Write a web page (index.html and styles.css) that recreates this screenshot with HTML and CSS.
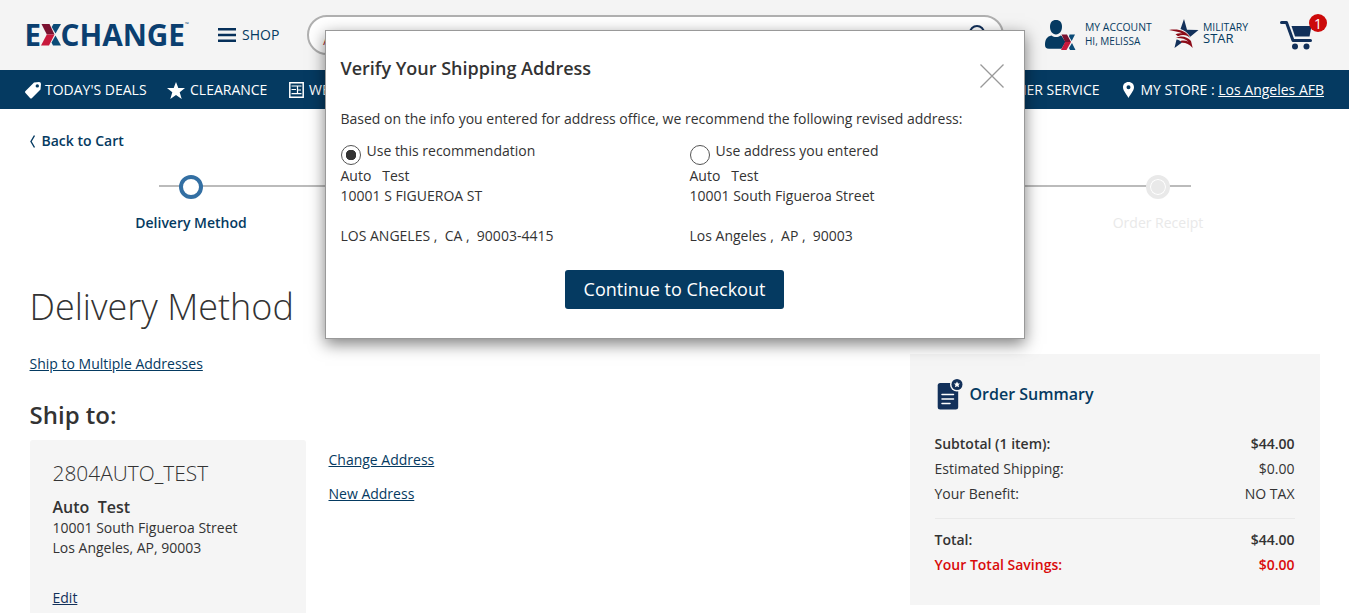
FILE: index.html
```html
<!DOCTYPE html>
<html lang="en">
<head>
<meta charset="utf-8">
<title>Exchange - Delivery Method</title>
<link rel="stylesheet" href="styles.css">
</head>
<body>
<div class="page">
  <header class="header">
    <svg class="logo" width="166" height="32" viewBox="0 0 166 32">
      <g class="logo-text">
        <text x="-.5" y="26.500" textLength="16.500" lengthAdjust="spacingAndGlyphs">E</text>
        <text x="35.500" y="26.500" textLength="124.500" lengthAdjust="spacingAndGlyphs">CHANGE</text>
        <text class="tm" x="160" y="7">™</text>
      </g>
      <path fill="#7b1230" d="M16.500 5h8l5 10.500h-7.700z"/>
      <path fill="#c8183c" d="M21.800 15.500h7.700L24 26.500h-8z"/>
      <path fill="#0b4b77" d="M28.500 5H36l-5.500 9.500-3.800-6.500z"/>
      <path fill="#0b4b77" d="M30.500 16.500L36 26.500h-8l-1.500-3z"/>
    </svg>
    <div class="shop">
      <svg width="18" height="14" viewBox="0 0 18 14"><path fill="#06305a" d="M0 0h18v2.500H0zM0 5.700h18v2.500H0zM0 11.400h18v2.500H0z"/></svg>
      <span>SHOP</span>
    </div>
    <div class="search">
      <span class="slash">/</span><span class="hint">Search by keyword</span>
      <svg width="20" height="20" viewBox="0 0 20 20" fill="none" stroke="#12305a" stroke-width="2"><circle cx="8" cy="8" r="7"/><path d="M13 13l6 6"/></svg>
    </div>
    <div class="account">
      <svg width="31" height="31" viewBox="0 0 31 31">
        <path fill="#053a61" d="M11 0c4 0 6 2.600 6 6.800 0 4.200-2.300 7.700-6 7.700S5 11 5 6.800C5 2.600 7 0 11 0zM6.500 15.500c2.800 2 6.500 2 9 0l1.200.6L20.500 22l-4 6.800H4C1 28.500 0 27.500 0 25c0-5.500 2-8.700 6.500-9.500z"/>
        <path fill="#7b1230" d="M16.500 14.500h5.500l4 7.500h-6z"/>
        <path fill="#c8183c" d="M20 22h6l-4.500 8h-5.500z"/>
        <path fill="#0b4b77" d="M24.500 14.500H30l-3.300 6.500-2.700-4.500zM27 23l3.500 7H25l-1-2z"/>
      </svg>
      <div class="two-line"><span>MY ACCOUNT</span><span class="hi">HI, MELISSA</span></div>
    </div>
    <div class="military">
      <svg width="30" height="30" viewBox="0 0 30 30">
        <path fill="#12305a" d="M15 0l3 10.700 11.500.3-8.200 6.700C18.500 13.500 15.500 11.500 11.500 10zM7.500 20.500c2 .3 3.800 1.300 5.500 3L5.500 29z"/>
        <path fill="#8c0b18" d="M0 11c9-1.300 17 .3 21.300 8C18 16 14 15 9 17.200L6.500 15.200c2.500-1 4.500-1.200 7-.7C9.500 12.500 5 12 0 11z"/>
        <path fill="#8c0b18" d="M6.500 19.200C12 16 18 17.500 22 22l1.700 7C20 25 16.500 23.500 12.500 23.800l-1-1.800c3-.8 5.500-.3 8 .8-3.500-3-8-4-13-3.600z"/>
      </svg>
      <div class="two-line"><span>MILITARY</span><span class="star-word">STAR</span></div>
    </div>
    <div class="cart">
      <svg width="32" height="30" viewBox="0 0 32 30">
        <path fill="none" stroke="#12305a" stroke-width="3" stroke-linejoin="round" stroke-linecap="round" d="M1.500 2.500h5l6.500 18h17.500"/>
        <path fill="#12305a" d="M11.500 6h20l-2 10.500H15z"/>
        <circle fill="#12305a" cx="15" cy="26.500" r="3"/><circle fill="#12305a" cx="26.500" cy="26.500" r="3"/>
      </svg>
      <span class="badge">1</span>
    </div>
  </header>

  <nav class="nav">
    <div class="nav-item deals">
      <svg width="16" height="17" viewBox="0 0 16 17"><path fill="#fff" fill-rule="evenodd" d="M9 .5L14 0q2 0 2 2l-.5 5.500L7 16q-1 1-2 0L.5 11q-1-1 0-2zM12.300 2.200a1.700 1.700 0 1 0 0 3.400 1.700 1.700 0 0 0 0-3.400z"/></svg>
      <span>TODAY'S DEALS</span>
    </div>
    <div class="nav-item clearance">
      <svg width="18" height="17" viewBox="0 0 18 17"><path fill="#fff" d="M9 0l2.300 6H18l-5.300 4.200L14.700 17 9 13l-5.700 4 2-6.800L0 6h6.700z"/></svg>
      <span>CLEARANCE</span>
    </div>
    <div class="nav-item weekly">
      <svg width="15" height="16" viewBox="0 0 15 16" fill="none" stroke="#fff"><path stroke-width="1.500" d="M.8.8h13.400v14.400H.8z"/><path stroke-width="1.200" d="M2.500 4h10M2.500 7.500H7M2.500 11.700h10M8.500 4v7.700M8.500 8h3.500"/></svg>
      <span>WEEKLY AD</span>
    </div>
    <div class="nav-item service"><span>CUSTOMER SERVICE</span></div>
    <div class="nav-item store">
      <svg width="11" height="16" viewBox="0 0 11 16"><path fill="#fff" fill-rule="evenodd" d="M5.500 0C9 0 11 2.400 11 5.300 11 9 6.500 13.500 5.500 16 4.500 13.500 0 9 0 5.300 0 2.400 2 0 5.500 0zm0 3.300a2 2 0 1 0 0 4 2 2 0 0 0 0-4z"/></svg>
      <span>MY STORE : <a>Los Angeles AFB</a></span>
    </div>
  </nav>

  <main class="main">
    <div class="back">
      <svg width="5" height="13" viewBox="0 0 5 13" fill="none" stroke="#053a61" stroke-width="1.400"><path d="M4.500.5L1 6.500l3.500 6"/></svg>
      <span>Back to Cart</span>
    </div>
    <div class="steps">
      <div class="step"><span class="dot"></span><span class="step-name">Delivery Method</span></div>
      <div class="step pending"><span class="dot"></span><span class="step-name">Order Receipt</span></div>
    </div>
    <div class="columns">
      <section class="delivery">
        <h1>Delivery Method</h1>
        <a class="multi">Ship to Multiple Addresses</a>
        <h2>Ship to:</h2>
        <div class="ship-row">
          <div class="address-card">
            <div class="nick">2804AUTO_TEST</div>
            <div class="name">Auto&nbsp; Test</div>
            <div>10001 South Figueroa Street</div>
            <div>Los Angeles, AP, 90003</div>
            <a class="edit">Edit</a>
          </div>
          <div class="links"><a>Change Address</a><a>New Address</a></div>
        </div>
      </section>
      <aside class="summary">
        <div class="summary-title">
          <svg width="26" height="31" viewBox="0 0 26 31">
            <rect x=".7" y="4" width="20.500" height="26.500" rx="2.500" fill="#12305a"/>
            <circle cx="20" cy="5.500" r="7" fill="#f5f5f5"/><circle cx="20" cy="5.500" r="5.500" fill="#12305a"/>
            <path fill="#fff" d="M20 2.500l1 2h2l-1.500 1.500.6 2.300L20 7.200l-2.100 1.100.6-2.300L17 4.500h2z"/>
            <path stroke="#fff" stroke-width="1.500" stroke-linecap="round" d="M5 15.500h11.500M5 20h11.500M5 24.500h8"/>
          </svg>
          <span>Order Summary</span>
        </div>
        <div class="row strong"><span>Subtotal (1 item):</span><span>$44.00</span></div>
        <div class="row"><span>Estimated Shipping:</span><span>$0.00</span></div>
        <div class="row"><span>Your Benefit:</span><span>NO TAX</span></div>
        <div class="rule"></div>
        <div class="row strong"><span>Total:</span><span>$44.00</span></div>
        <div class="row strong savings"><span>Your Total Savings:</span><span>$0.00</span></div>
      </aside>
    </div>
  </main>

  <div class="modal" role="dialog">
    <div class="modal-head">
      <span>Verify Your Shipping Address</span>
      <svg width="24" height="24" viewBox="0 0 24 24" stroke="#999" stroke-width="1.300"><path d="M.5.500l23 23M23.500.5l-23 23"/></svg>
    </div>
    <p class="intro">Based on the info you entered for address office, we recommend the following revised address:</p>
    <div class="options">
      <div class="option">
        <label><span class="radio on"></span>Use this recommendation</label>
        <div>Auto &nbsp; Test</div>
        <div>10001 S FIGUEROA ST</div>
        <div class="city">LOS ANGELES ,&nbsp; CA ,&nbsp; 90003-4415</div>
      </div>
      <div class="option">
        <label><span class="radio"></span>Use address you entered</label>
        <div>Auto &nbsp; Test</div>
        <div>10001 South Figueroa Street</div>
        <div class="city">Los Angeles ,&nbsp; AP ,&nbsp; 90003</div>
      </div>
    </div>
    <button class="continue">Continue to Checkout</button>
  </div>
</div>
</body>
</html>
```
FILE: styles.css
```css
* { box-sizing: border-box; }
body { margin: 0; background: #fff; font: 14px/20px "Open Sans", sans-serif; color: #333; height: 613px; overflow: hidden; }
svg { display: block; flex: none; }
span, a, label { white-space: nowrap; }
a { text-decoration: underline; }
h1, h2, p { margin: 0; }
.page { width: 1349px; height: 613px; position: relative; overflow: hidden; }

.header { height: 70px; background: #f4f4f4; display: flex; align-items: flex-start; padding-left: 25px; color: #053a61; }
.logo { margin-top: 19px; overflow: visible; }
.logo-text { font-size: 29.500px; font-weight: 700; fill: #0b3f70; }
.logo-text .tm { font-size: 5px; font-weight: 400; }
.shop { display: flex; align-items: center; gap: 6px; margin: 25px 0 0 27px; width: 89px; }
.search { width: 697px; height: 40px; margin-top: 15px; border: 2px solid #b0b0b0; border-radius: 20px; background: #fff; display: flex; align-items: center; padding: 0 13px 0 14px; color: #333; }
.search .hint { flex: 1; margin: 2px 0 0 4px; }
.search .slash { color: #a33; width: 5px; margin-top: 10px; }
.account { display: flex; margin: 20px 0 0 41px; width: 124px; gap: 9px; }
.two-line { display: flex; flex-direction: column; font-size: 10.400px; line-height: 14px; }
.two-line .hi { font-size: 10px; }
.military { display: flex; gap: 4px; margin-top: 19px; width: 111px; }
.military .two-line { line-height: 11px; padding-top: 3px; }
.military .star-word { font-size: 13px; }
.cart { position: relative; margin-top: 20px; width: 48px; }
.badge { position: absolute; left: 29px; top: -6px; width: 18px; height: 18px; border-radius: 50%; background: #cc0a0a; color: #fff; text-align: center; line-height: 19px; }

.nav { height: 39px; background: #053a61; color: #fff; display: flex; align-items: center; padding: 0 25px 0 25px; }
.nav-item { display: flex; align-items: center; gap: 5px; padding-top: 1px; }
.deals { width: 142px; gap: 4px; }
.clearance { width: 122px; }
.weekly { width: 120px; }
.service { margin-left: auto; margin-right: 23px; }
.store { gap: 7px; }

.main { padding: 22px 29px 0 30px; }
.back { display: flex; align-items: center; gap: 6.500px; font-weight: 600; color: #053a61; height: 20px; }
.steps { width: 1032px; margin: 34px 0 0 129px; height: 46px; display: flex; justify-content: space-between; background: linear-gradient(#bbb, #bbb) 0 0 / 100% 2px no-repeat; }
.step { display: flex; flex-direction: column; align-items: center; width: 64px; margin-top: -10px; font-weight: 600; color: #053a61; }
.dot { width: 24px; height: 24px; border: 4px solid #336fa3; border-radius: 50%; background: #fff; flex: none; }
.step-name { margin-top: 14px; }
.pending { color: #e9e9e9; font-weight: 400; margin-right: 1px; }
.pending .dot { background: #e9e9e9; border-color: #e9e9e9; box-shadow: inset 0 0 0 1px #fff; }
.columns { display: flex; justify-content: space-between; align-items: flex-start; }
.delivery { padding-top: 51px; }
h1 { font-size: 36px; line-height: 50px; font-weight: 300; margin-left: -.5px; }
.multi, .links a { color: #053a61; }
.multi { display: block; margin: 22px 0 0 -.5px; }
h2 { font-size: 24px; line-height: 34px; font-weight: 600; margin: 24px 0 0 -.5px; }
.ship-row { display: flex; gap: 22.500px; margin-top: 8px; }
.address-card { width: 276px; height: 190px; background: #f5f5f5; border-radius: 3px; padding: 18px 22.500px; }
.nick { font-size: 20.900px; line-height: 30px; font-weight: 300; }
.name { font-size: 16px; font-weight: 600; line-height: 24px; margin: 7px 0 -1px; }
.edit { display: block; margin-top: 30px; color: #12305a; }
.links { display: flex; flex-direction: column; gap: 14px; padding-top: 10px; }
.summary { width: 410px; height: 251px; margin-top: 123px; background: #f5f5f5; padding: 25px 25.500px 0 24.500px; }
.summary-title { display: flex; gap: 7px; font-size: 16px; font-weight: 600; line-height: 31px; color: #053a61; padding-left: 2px; margin-bottom: 21px; }
.row { display: flex; justify-content: space-between; line-height: 25px; }
.strong { font-weight: 600; }
.rule { height: 1px; background: #e9e9e9; margin: 12px 0 8px; }
.savings { color: #d90b0b; }

/* Dialog floating over the checkout page */
.modal { position: absolute; left: 325px; top: 30px; width: 700px; height: 309px; background: #fff; border: 1px solid #999; box-shadow: 0 5px 15px rgba(0,0,0,.5); padding: 24px 15px 0 14.500px; }
.modal-head { display: flex; justify-content: space-between; font-size: 18px; line-height: 26px; font-weight: 600; padding-right: 5.500px; }
.modal-head svg { margin-top: 9px; }
.intro { margin-top: 21px; white-space: nowrap; }
.options { display: grid; grid-template-columns: 349px 1fr; margin-top: 12px; }
.option label { display: flex; gap: 6px; height: 25px; }
.radio { width: 20px; height: 20px; margin-top: 4px; border: 1px solid #555; border-radius: 50%; flex: none; }
.radio.on { background: radial-gradient(circle, #333 5px, transparent 5.500px); }
.city { margin-top: 20px; }
.continue { display: block; width: 219px; height: 39px; margin: 24px 0 0 224.500px; border: 0; border-radius: 3px; background: #053a61; color: #fff; font: 18px/36px "Open Sans", sans-serif; padding: 0 0 2px; white-space: nowrap; }
```
